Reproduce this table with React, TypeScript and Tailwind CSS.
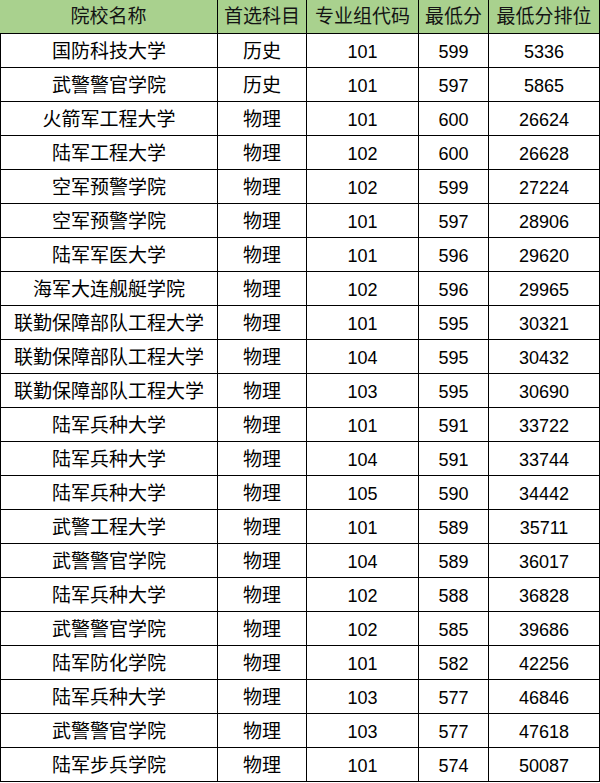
import React from "react";

const rows: [string, string, string, string, string][] = [
  ["国防科技大学", "历史", "101", "599", "5336"],
  ["武警警官学院", "历史", "101", "597", "5865"],
  ["火箭军工程大学", "物理", "101", "600", "26624"],
  ["陆军工程大学", "物理", "102", "600", "26628"],
  ["空军预警学院", "物理", "102", "599", "27224"],
  ["空军预警学院", "物理", "101", "597", "28906"],
  ["陆军军医大学", "物理", "101", "596", "29620"],
  ["海军大连舰艇学院", "物理", "102", "596", "29965"],
  ["联勤保障部队工程大学", "物理", "101", "595", "30321"],
  ["联勤保障部队工程大学", "物理", "104", "595", "30432"],
  ["联勤保障部队工程大学", "物理", "103", "595", "30690"],
  ["陆军兵种大学", "物理", "101", "591", "33722"],
  ["陆军兵种大学", "物理", "104", "591", "33744"],
  ["陆军兵种大学", "物理", "105", "590", "34442"],
  ["武警工程大学", "物理", "101", "589", "35711"],
  ["武警警官学院", "物理", "104", "589", "36017"],
  ["陆军兵种大学", "物理", "102", "588", "36828"],
  ["武警警官学院", "物理", "102", "585", "39686"],
  ["陆军防化学院", "物理", "101", "582", "42256"],
  ["陆军兵种大学", "物理", "103", "577", "46846"],
  ["武警警官学院", "物理", "103", "577", "47618"],
  ["陆军步兵学院", "物理", "101", "574", "50087"],
];

const headers = ["院校名称", "首选科目", "专业组代码", "最低分", "最低分排位"];

// column boxes incl. right border; first column also carries the left rule in body rows
const widths = ["w-[218px]", "w-[89px]", "w-[112px]", "w-[70px]", "w-[111px]"];

export default function App() {
  return (
    <div
      className="w-[600px] bg-white text-black"
      style={{ fontFamily: '"Liberation Sans", "Noto Sans CJK SC", sans-serif' }}
    >
      {/* header */}
      <div className="flex h-[34px] border-b border-black bg-[#a9d18e]">
        {headers.map((h, j) => (
          <div
            key={h}
            className={`${widths[j]} flex shrink-0 items-center justify-center border-r border-black pt-[2px] text-[19px] text-[#141414]`}
          >
            {h}
          </div>
        ))}
      </div>

      {/* body */}
      {rows.map((r, i) => (
        <div key={i} className="flex h-[34px] border-b border-black">
          {r.map((c, j) => (
            <div
              key={j}
              className={`${widths[j]} ${j === 0 ? "border-l" : ""} ${
                j < 2 ? "text-[19px]" : "text-[18px]"
              } flex shrink-0 items-center justify-center whitespace-nowrap border-r border-black pt-[4px]`}
            >
              {c}
            </div>
          ))}
        </div>
      ))}
    </div>
  );
}
